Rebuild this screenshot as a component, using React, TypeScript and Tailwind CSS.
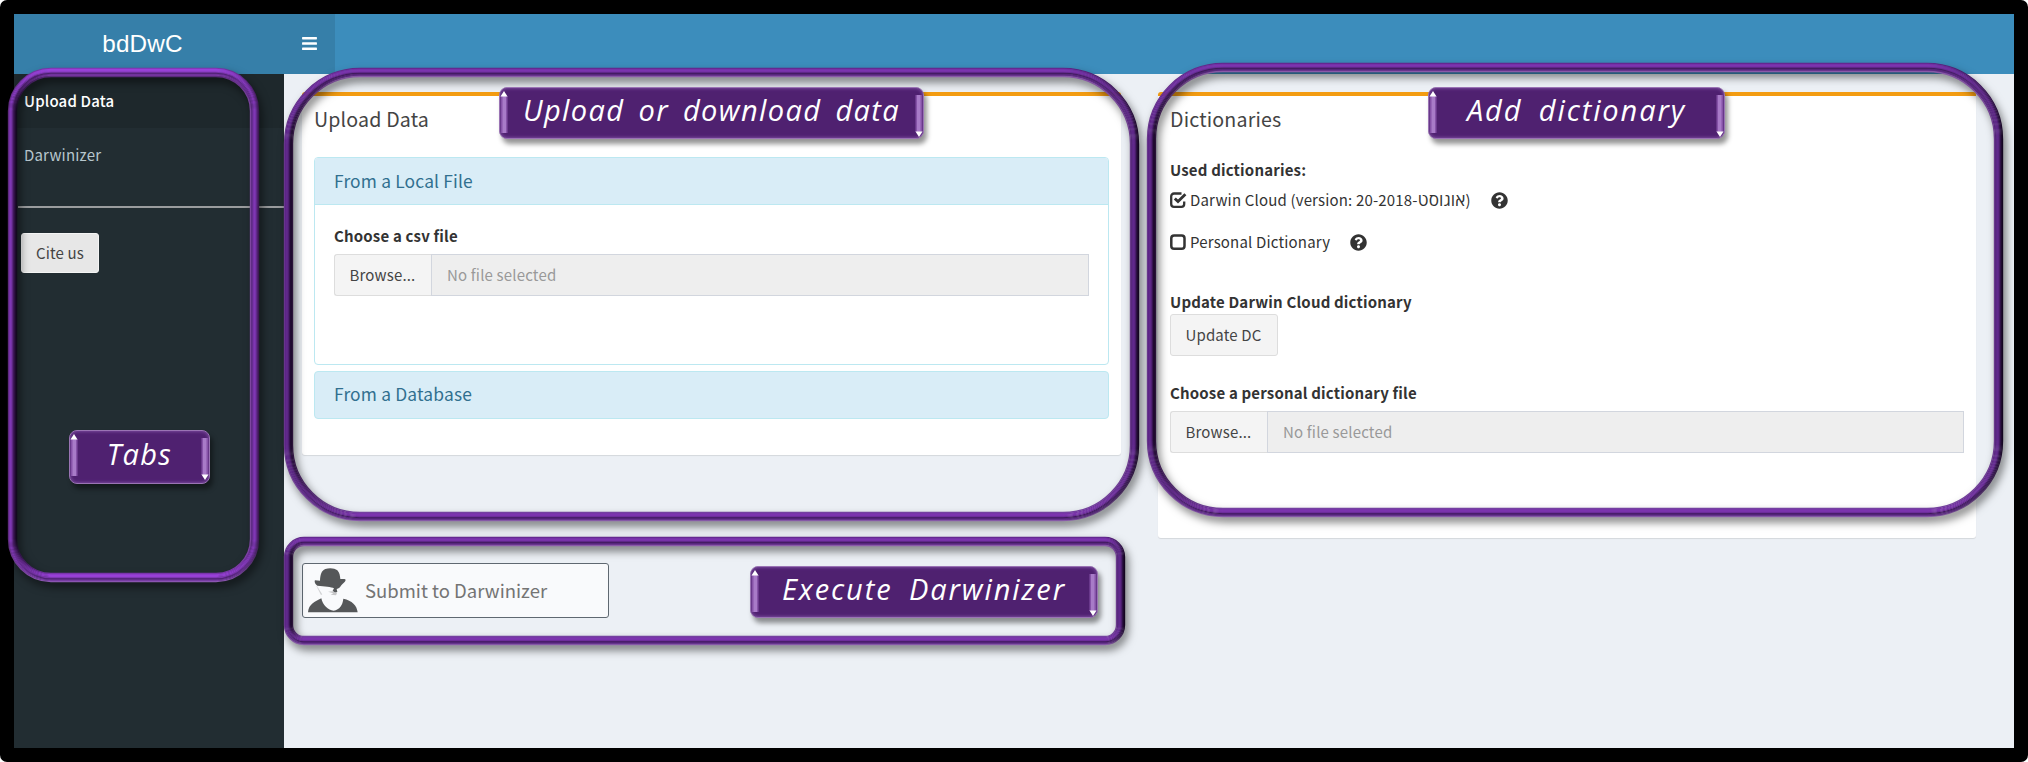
import React from "react";
import { FaBars, FaQuestionCircle } from "react-icons/fa";

type Side = string[];
type Palette = { top: Side; right: Side; bottom: Side; left: Side };

const deep: Palette = {
  top: ["#5f268a", "#7530a6", "#7d35b0", "#7b34ae", "#6b2c98", "#3f1a5c", "#56267a", "#5e2a85", "#8a5aa8"],
  right: ["#140620", "#1c0a2c", "#2a1040", "#451b66", "#5a2582", "#612a8c", "#5f298a", "#55267a", "#6a3a8c"],
  bottom: ["#8f63ae", "#6a3890", "#5a2880", "#3f1a5c", "#6a2c96", "#7a33ab", "#7e36b0", "#7a33ab", "#7440a0"],
  left: ["#6a3a8c", "#5b2486", "#612a8c", "#5f298a", "#54237a", "#3b1658", "#240c36", "#1c0a2c", "#2a1238"],
};

const bright: Palette = {
  top: ["#7a34ac", "#9a40da", "#9a40da", "#9440d0", "#7a34ac", "#4d2070", "#6d3098", "#7c38a8", "#5a2a7c"],
  right: ["#3a1850", "#4a1f68", "#5e2886", "#7532a6", "#8038b6", "#7a35ac", "#6a2e96", "#5a2780", "#7d45a0"],
  bottom: ["#8f5cb4", "#7c40a8", "#6a3292", "#4d2070", "#7a34ac", "#9440d0", "#9a40da", "#963fd6", "#7a34ac"],
  left: ["#5a2a78", "#7432a4", "#8038b6", "#7a35ac", "#5f2a88", "#45195f", "#32124a", "#220c32", "#140820"],
};

function Ring({ id, w, h, r, palette, className }: { id: string; w: number; h: number; r: number; palette: Palette; className: string }) {
  return (
    <svg
      width={w}
      height={h}
      viewBox={`0 0 ${w} ${h}`}
      className={`absolute overflow-visible drop-shadow-[3px_5px_4px_rgba(0,0,0,0.5)] ${className}`}
      fill="none"
      strokeWidth={1.35}
    >
      {palette.top.map((_, k) => {
        const i = k + 0.5;
        const q = r - i;
        const x1 = w - i;
        const y1 = h - i;
        const corners = [
          { n: "a", sx: i, sy: r, ex: r, ey: i, from: palette.left[k], to: palette.top[k] },
          { n: "b", sx: w - r, sy: i, ex: x1, ey: r, from: palette.top[k], to: palette.right[k] },
          { n: "c", sx: x1, sy: h - r, ex: w - r, ey: y1, from: palette.right[k], to: palette.bottom[k] },
          { n: "d", sx: r, sy: y1, ex: i, ey: h - r, from: palette.bottom[k], to: palette.left[k] },
        ];
        return (
          <g key={k}>
            {corners.map((c) => (
              <React.Fragment key={c.n}>
                <linearGradient id={`${id}${k}${c.n}`} gradientUnits="userSpaceOnUse" x1={c.sx} y1={c.sy} x2={c.ex} y2={c.ey}>
                  <stop offset="0" stopColor={c.from} />
                  <stop offset="1" stopColor={c.to} />
                </linearGradient>
                <path d={`M${c.sx} ${c.sy}A${q} ${q} 0 0 1 ${c.ex} ${c.ey}`} stroke={`url(#${id}${k}${c.n})`} />
              </React.Fragment>
            ))}
            <path d={`M${r} ${i}H${w - r}`} stroke={palette.top[k]} />
            <path d={`M${x1} ${r}V${h - r}`} stroke={palette.right[k]} />
            <path d={`M${r} ${y1}H${w - r}`} stroke={palette.bottom[k]} />
            <path d={`M${i} ${r}V${h - r}`} stroke={palette.left[k]} />
          </g>
        );
      })}
    </svg>
  );
}

function Plaque({ className, textClass, children }: { className: string; textClass: string; children: string }) {
  return (
    <div
      className={`absolute flex justify-between rounded-[8px] border border-[#9a74b4] bg-[#4f2170] shadow-[3px_5px_5px_rgba(0,0,0,0.42),inset_0_0_3px_1px_#76469a] ${className}`}
    >
      <svg width="8" height="46" viewBox="0 0 8 46" className="mt-[3px]">
        <rect x="1" y="5" width="6.5" height="37" fill="#8653a8" />
        <rect x="2.5" y="5" width="3.5" height="37" fill="#a87bc8" />
        <path d="M4 0L7.5 5.5H0.5z" fill="#fff" />
      </svg>
      <span className={`whitespace-nowrap font-['Open_Sans','Noto_Sans',sans-serif] text-[29px] leading-[36px] text-white italic ${textClass}`}>
        {children}
      </span>
      <svg width="8" height="46" viewBox="0 0 8 46" className="mt-[3px]">
        <rect x="0.5" y="4" width="6.5" height="37" fill="#8653a8" />
        <rect x="2" y="4" width="3.5" height="37" fill="#a87bc8" />
        <path d="M4 46L7.5 40.5H0.5z" fill="#fff" />
      </svg>
    </div>
  );
}

function FilePicker() {
  return (
    <div className="flex h-[42px] leading-[40px]">
      <button className="w-[97px] rounded-l-[3px] border border-r-0 border-[#dddddd] bg-[#f4f4f4] pr-px text-center tracking-[0.17px] text-[#444]">Browse...</button>
      <div className="flex-1 border border-[#d2d6de] bg-[#eeeeee] pl-[15px] text-[#999]">No file selected</div>
    </div>
  );
}

function Check({ checked }: { checked?: boolean }) {
  return (
    <svg width="17" height="17" viewBox="0 0 17 17" fill="none" stroke="#333" strokeWidth="2.5">
      {checked ? (
        <>
          <path d="M11.5 1.5H4A2.8 2.8 0 0 0 1.2 4.3V12A2.8 2.8 0 0 0 4 14.8H11.4A2.8 2.8 0 0 0 14.2 12V9.5" strokeWidth="2.3" />
          <path d="M4.8 6.4L8 9.6L15.4 2.2" strokeWidth="2.8" />
        </>
      ) : (
        <rect x="1.3" y="1.5" width="13.2" height="13.3" rx="2.8" />
      )}
    </svg>
  );
}

function Gentleman() {
  return (
    <svg width="50" height="45" viewBox="0 0 150 135" fill="#555759">
      <path d="M36 38C37 20 40 8 52 3C64 -1 80 0 88 7C95 14 96 24 97 33C104 34 112 31 113 36C112 42 104 47 100 52C97 58 92 62 86 63L88 72L80 74L74 68L78 61C70 56 50 56 28 53C22 50 18 40 21 37C26 38 31 38 36 38Z" />
      <path d="M60 71L74 70L87 76L84 82L68 80L76 76Z" fill="#c6c6c8" />
      <path d="M26 54L42 79L39 80Z" fill="#c9cacc" stroke="#d5d6d8" />
      <path d="M0 133C2 108 20 102 40 91C44 111 60 127 77 128C95 125 104 111 106 92C132 98 147 112 149 133Z" />
    </svg>
  );
}

export default function App() {
  return (
    <div className="relative h-[762px] w-[2028px] overflow-hidden rounded-[7px] bg-black p-[14px] font-['Noto_Sans_CJK_SC',sans-serif] text-[15px] tracking-[0.17px] text-[#333]">
      <div className="flex h-[734px] flex-col overflow-hidden bg-[#ecf0f5]">
        <header className="flex h-[60px] shrink-0 bg-[#3c8dbc] text-white">
          <div className="w-[270px] bg-[#367fa9] pr-[13px] text-center font-['Liberation_Sans',sans-serif] text-[24.3px] leading-[59px]">bdDwC</div>
          <button className="flex w-[51px] items-center justify-center bg-[#367fa9] pb-[2px] text-[17px]">
            <FaBars />
          </button>
        </header>

        <div className="flex flex-1">
          <aside className="w-[270px] bg-[#222d32]">
            <nav>
              <a className="block h-[54px] bg-[#1e282c] pl-[10px] leading-[54px] font-medium text-white">Upload Data</a>
              <a className="block h-[54px] pl-[10px] leading-[54px] text-[#b8c7ce]">Darwinizer</a>
            </nav>
            <div className="mt-[24px] ml-[4px] h-[2px] bg-[#9a9c9e]" />
            <button className="mt-[25px] ml-[7px] h-[40px] w-[78px] rounded-[3px] border border-[#f4f4f4] bg-[#e7e7e7] tracking-[0.17px] text-[#444]">Cite us</button>
          </aside>

          <main className="flex flex-1 gap-[37px] pt-[18px] pl-[18px]">
            <div className="w-[819px]">
              <section className="h-[363px] rounded-[3px] border-t-4 border-[#f39c12] bg-white px-[12px] shadow-[0_1px_1px_rgba(0,0,0,0.1)]">
                <h3 className="h-[61px] pt-[10px] text-[19.6px] leading-[26px] text-[#444]">Upload Data</h3>
                <div className="h-[208px] rounded-[4px] border border-[#bce8f1]">
                  <div className="h-[47px] rounded-t-[3px] border-b border-[#bce8f1] bg-[#d9edf7] pl-[19px] text-[17.4px] leading-[45px] text-[#31708f]">From a Local File</div>
                  <div className="px-[19px] pt-[21px]">
                    <label className="mb-[8px] block leading-[20px] font-bold">Choose a csv file</label>
                    <FilePicker />
                  </div>
                </div>
                <div className="mt-[6px] h-[48px] rounded-[4px] border border-[#bce8f1] bg-[#d9edf7] pl-[19px] text-[17.4px] leading-[44px] text-[#31708f]">From a Database</div>
              </section>
              <button className="mt-[108px] flex h-[55px] w-[307px] items-center gap-[7px] rounded-[3px] border border-[#5f6871] bg-[#f9fafc] pl-[5px] text-[18.5px] text-[#747474]">
                <Gentleman />
                <span className="pb-[2px] leading-[26px] tracking-normal">Submit to Darwinizer</span>
              </button>
            </div>

            <section className="h-[446px] w-[818px] rounded-[3px] border-t-4 border-[#f39c12] bg-white px-[12px] shadow-[0_1px_1px_rgba(0,0,0,0.1)]">
              <h3 className="h-[64px] pt-[10px] text-[19.6px] leading-[26px] text-[#444]">Dictionaries</h3>
              <p className="leading-[20px] font-bold">Used dictionaries:</p>
              <div className="mt-[9px] flex h-[22px] items-center">
                <Check checked />
                <span className="ml-[3px] leading-[20px] whitespace-nowrap">
                  Darwin Cloud (version: 20-2018-<span className="font-['Open_Sans','DejaVu_Sans',sans-serif] text-[17.2px] leading-[10px]">אוגוסט</span>)
                </span>
                <FaQuestionCircle className="ml-[20px] size-[17px]" />
              </div>
              <div className="mt-[20px] flex h-[22px] items-center">
                <Check />
                <span className="ml-[3px] leading-[20px]">Personal Dictionary</span>
                <FaQuestionCircle className="ml-[20px] size-[17px]" />
              </div>
              <p className="mt-[39px] leading-[20px] font-bold">Update Darwin Cloud dictionary</p>
              <button className="mt-[2px] block h-[42px] w-[108px] rounded-[3px] border border-[#ddd] bg-[#f4f4f4] pr-px tracking-[0.17px] text-[#444]">Update DC</button>
              <label className="mt-[27px] mb-[8px] block leading-[20px] font-bold">Choose a personal dictionary file</label>
              <FilePicker />
            </section>
          </main>
        </div>
      </div>

      <Ring id="tabs" w={251} h={514} r={43} palette={bright} className="top-[68px] left-[8px]" />
      <Ring id="data" w={855} h={453} r={76} palette={deep} className="top-[68px] left-[284px]" />
      <Ring id="dict" w={856} h={454} r={76} palette={deep} className="top-[63px] left-[1147px]" />
      <Ring id="exec" w={841} h={108} r={20} palette={deep} className="top-[537px] left-[284px]" />

      <Plaque className="top-[430px] left-[69px] h-[54px] w-[141px]" textClass="mt-[5px] tracking-[1.3px]">Tabs</Plaque>
      <Plaque className="top-[87px] left-[499px] h-[52px] w-[425px]" textClass="mt-[4px] tracking-[1.4px] [word-spacing:5px]">Upload or download data</Plaque>
      <Plaque className="top-[87px] left-[1428px] h-[52px] w-[297px]" textClass="mt-[4px] tracking-[1.9px] [word-spacing:7px]">Add dictionary</Plaque>
      <Plaque className="top-[566px] left-[750px] h-[52px] w-[348px]" textClass="mt-[4px] tracking-[1.9px] [word-spacing:7px]">Execute Darwinizer</Plaque>
    </div>
  );
}
